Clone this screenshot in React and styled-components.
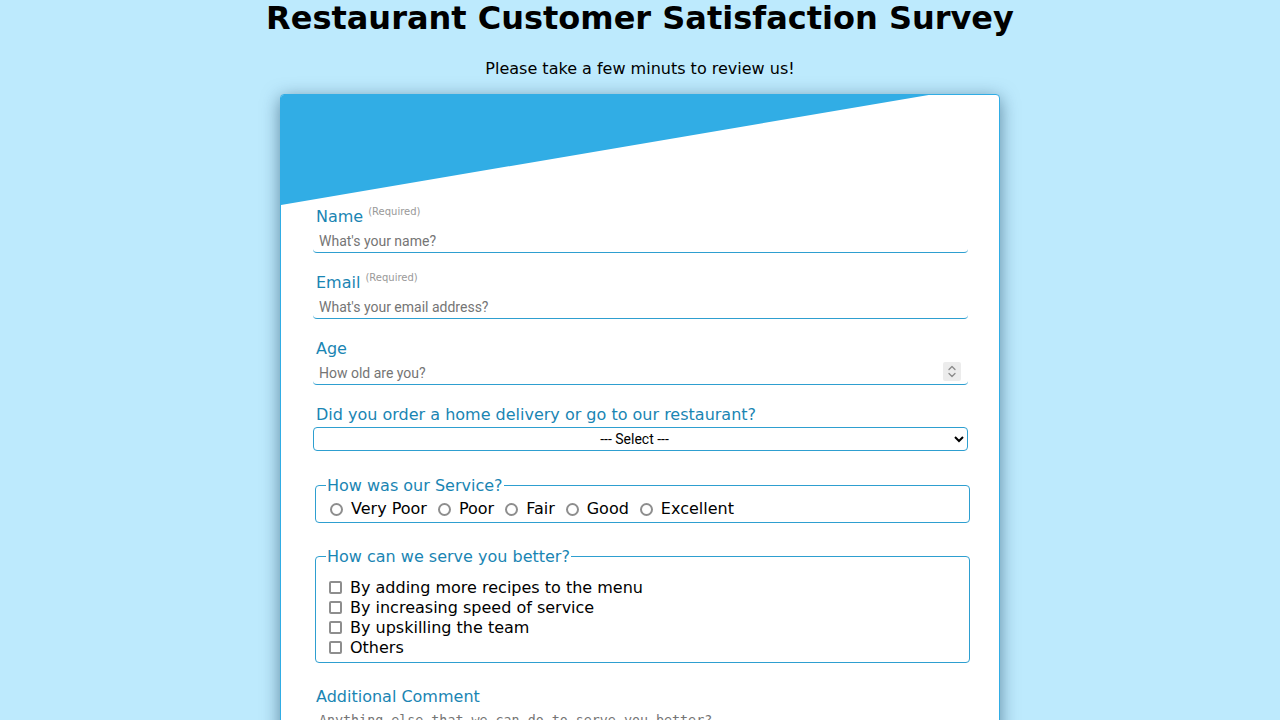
import React from 'react';
import styled, { createGlobalStyle } from 'styled-components';

const GlobalStyle = createGlobalStyle`
  body {
    margin: 0;
    background: #bdeafd;
    font-family: "DejaVu Sans", sans-serif;
  }
`;

const Page = styled.div`
  display: flex;
  flex-direction: column;
  align-items: center;
  padding-bottom: 40px;
`;

const Title = styled.h1`
  margin: -1px 0 0;
  font-size: 32px;
  font-weight: bold;
  color: #000;
`;

const Subtitle = styled.p`
  margin: 22px 0 16px;
  font-size: 16px;
  color: #000;
`;

const Card = styled.div`
  position: relative;
  width: 718px;
  background: #fff;
  border: 1px solid #31ade5;
  border-radius: 4px;
  box-shadow: 0 4px 18px rgba(30, 70, 100, 0.6);
  overflow: hidden;
`;

const Banner = styled.div`
  height: 110px;
  background: #31ade5;
  clip-path: polygon(0 0, 90.2% 0, 0 100%);
`;

const Form = styled.form`
  display: flex;
  flex-direction: column;
  padding: 0 31px 40px 32px;
`;

const Field = styled.div`
  display: flex;
  flex-direction: column;
  margin-bottom: ${p => p.$gap || 18}px;
`;

const Label = styled.label`
  display: block;
  height: 20px;
  color: #1a85b3;
  font-size: 16px;
  padding-left: 3px;
  line-height: 20px;
  margin-top: 2px;
`;

const Required = styled.span`
  position: relative;
  top: -7px;
  color: #999;
  font-size: 10px;
  margin-left: 5px;
`;

const inputFont = `
  font-family: Roboto, sans-serif;
  font-size: 14px;
`;

const InputWrap = styled.div`
  position: relative;
  display: flex;
  flex-direction: column;
`;

const TextInput = styled.input`
  box-sizing: border-box;
  height: 25px;
  margin-top: 1px;
  border: none;
  border-bottom: 1px solid #2e9fd0;
  border-radius: 0 0 4px 4px;
  padding: 2px 6px 0;
  outline: none;
  background: transparent;
  ${inputFont}

  &::placeholder {
    color: #757575;
  }

  &::-webkit-inner-spin-button,
  &::-webkit-outer-spin-button {
    -webkit-appearance: none;
    margin: 0;
  }
`;

const Spinner = styled.div`
  position: absolute;
  right: 7px;
  top: 3px;
  width: 18px;
  height: 19px;
  background: #ececec;
  border-radius: 2px;
  display: flex;
  align-items: center;
  justify-content: center;
`;

const Select = styled.select`
  box-sizing: border-box;
  margin-top: 2px;
  border: 1px solid #2e9fd0;
  border-radius: 4px;
  height: 24px;
  text-align: center;
  text-align-last: center;
  background: #fff;
  color: #000;
  ${inputFont}
`;

const FieldSet = styled.fieldset`
  border: 1px solid #2e9fd0;
  border-radius: 4px;
  margin: 0 -2px ${p => p.$gap || 20}px 2px;
  padding: 0 10px 2px;
`;

const Legend = styled.legend`
  color: #1a85b3;
  font-size: 16px;
  padding: 0 1px;
`;

const RadioRow = styled.div`
  display: flex;
  align-items: center;
  padding-top: 3px;
  font-size: 16px;
  line-height: 22px;
`;

const Option = styled.label`
  display: flex;
  align-items: center;
  margin-right: 7px;
  color: #000;
`;

const Radio = styled.input.attrs({ type: 'radio' })`
  appearance: none;
  box-sizing: border-box;
  width: 13px;
  height: 13px;
  margin: 0 8px 0 4px;
  border: 2px solid #8e8e8e;
  border-radius: 50%;
  background: #fff;
`;

const CheckList = styled.div`
  display: flex;
  flex-direction: column;
  padding-top: 11px;
  padding-bottom: 3px;
  font-size: 16px;
`;

const CheckOption = styled.label`
  display: flex;
  align-items: center;
  height: 20px;
  color: #000;
`;

const Checkbox = styled.input.attrs({ type: 'checkbox' })`
  appearance: none;
  box-sizing: border-box;
  width: 13px;
  height: 13px;
  margin: 0 8px 0 3px;
  border: 2px solid #8e8e8e;
  border-radius: 2px;
  background: #fff;
`;

const TextArea = styled.textarea`
  margin-top: 2px;
  border: none;
  border-bottom: 1px solid #2e9fd0;
  border-radius: 0 0 4px 4px;
  padding: 4px 6px;
  height: 80px;
  outline: none;
  resize: vertical;
  font-family: "DejaVu Sans Mono", monospace;
  font-size: 13.333px;
`;

const SpinIcon = () => (
  <svg width="10" height="15" viewBox="0 0 10 15" fill="none" stroke="#8a8a8a" strokeWidth="1.3" strokeLinecap="round" strokeLinejoin="round">
    <path d="M2 5.5 L5 2.5 L8 5.5" />
    <path d="M2 9.5 L5 12.5 L8 9.5" />
  </svg>
);

const ratings = ['Very Poor', 'Poor', 'Fair', 'Good', 'Excellent'];
const improvements = [
  'By adding more recipes to the menu',
  'By increasing speed of service',
  'By upskilling the team',
  'Others',
];

export default function App() {
  return (
    <Page>
      <GlobalStyle />
      <Title>Restaurant Customer Satisfaction Survey</Title>
      <Subtitle>Please take a few minuts to review us!</Subtitle>
      <Card>
        <Banner />
        <Form>
          <Field>
            <Label>Name<Required>(Required)</Required></Label>
            <TextInput type="text" placeholder="What's your name?" />
          </Field>
          <Field>
            <Label>Email<Required>(Required)</Required></Label>
            <TextInput type="email" placeholder="What's your email address?" />
          </Field>
          <Field>
            <Label>Age</Label>
            <InputWrap>
              <TextInput type="number" placeholder="How old are you?" />
              <Spinner><SpinIcon /></Spinner>
            </InputWrap>
          </Field>
          <Field $gap={25}>
            <Label>Did you order a home delivery or go to our restaurant?</Label>
            <Select defaultValue="">
              <option value="">--- Select ---</option>
              <option>Home delivery</option>
              <option>Restaurant</option>
            </Select>
          </Field>
          <FieldSet $gap={24}>
            <Legend>How was our Service?</Legend>
            <RadioRow>
              {ratings.map(r => (
                <Option key={r}>
                  <Radio name="service" />
                  {r}
                </Option>
              ))}
            </RadioRow>
          </FieldSet>
          <FieldSet $gap={22}>
            <Legend>How can we serve you better?</Legend>
            <CheckList>
              {improvements.map(i => (
                <CheckOption key={i}>
                  <Checkbox />
                  {i}
                </CheckOption>
              ))}
            </CheckList>
          </FieldSet>
          <Field>
            <Label>Additional Comment</Label>
            <TextArea placeholder="Anything else that we can do to serve you better?" />
          </Field>
        </Form>
      </Card>
    </Page>
  );
}
